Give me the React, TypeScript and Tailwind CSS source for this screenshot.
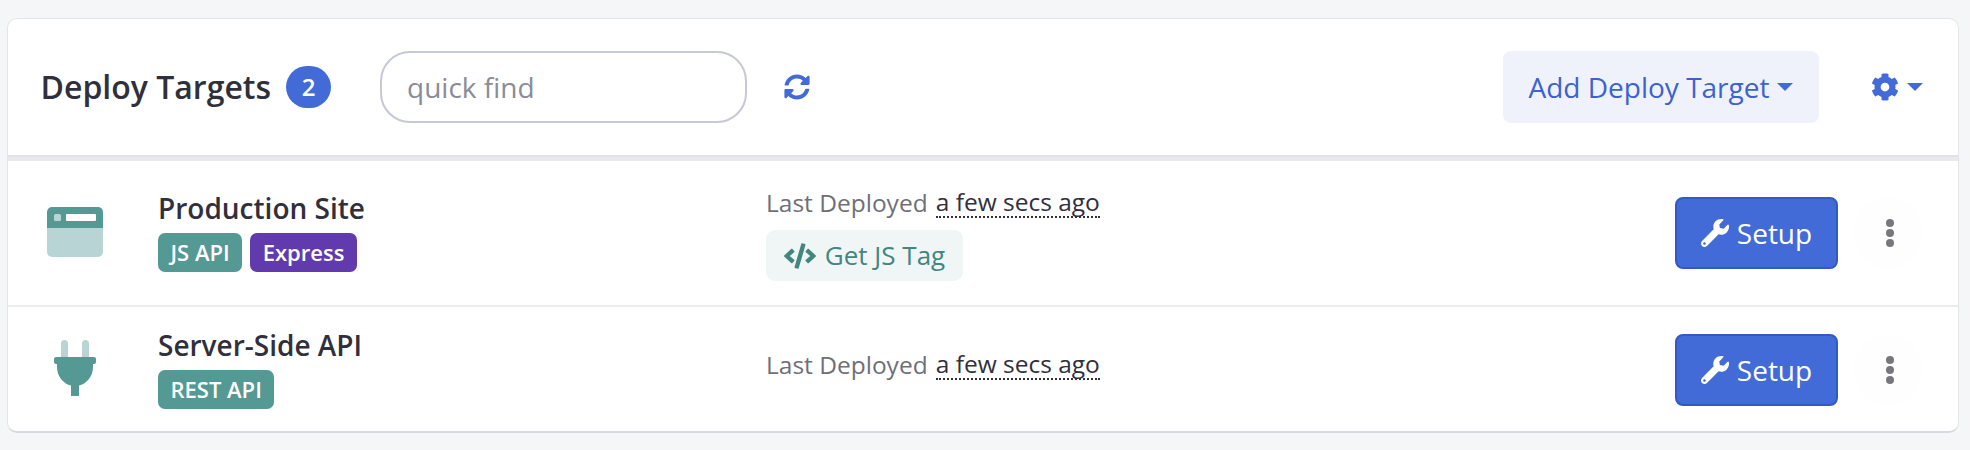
import { FaCode, FaCog, FaSyncAlt, FaWrench } from 'react-icons/fa';

function WindowIcon() {
  return (
    <svg width="56" height="50" viewBox="0 0 56 50" className="shrink-0">
      <path d="M0 21h56v24a5 5 0 0 1-5 5H5a5 5 0 0 1-5-5z" fill="#b9d4d4" />
      <path d="M5 0h46a5 5 0 0 1 5 5v16H0V5a5 5 0 0 1 5-5z" fill="#549994" />
      <rect x="7" y="7" width="7" height="7" rx="1.5" fill="#b9d4d4" />
      <rect x="19" y="7" width="30" height="7" rx="1" fill="#fff" />
    </svg>
  );
}

function PlugIcon() {
  return (
    <svg width="42" height="56" viewBox="0 0 42 56" className="shrink-0">
      <path d="M7 3.500a3.500 3.500 0 0 1 7 0V17H7zM28 3.500a3.500 3.500 0 0 1 7 0V17h-7z" fill="#b9d4d4" />
      <path
        d="M2 17h38a2 2 0 0 1 2 2v3a2 2 0 0 1-2 2h-1v3c0 10-7 17-14 18.500V56h-8V45.500C10 44 3 37 3 27v-3H2a2 2 0 0 1-2-2v-3a2 2 0 0 1 2-2z"
        fill="#549994"
      />
    </svg>
  );
}

function Caret({ className }: { className: string }) {
  return <span className={`inline-block w-0 h-0 border-x-[8px] border-x-transparent border-t-[8px] ${className}`} />;
}

function Pill({ label, purple }: { label: string; purple?: boolean }) {
  return (
    <span
      className={`h-[39px] px-[12.500px] rounded-[7px] flex items-center text-[22px] font-semibold text-white ${
        purple ? 'bg-[#613bad]' : 'bg-[#549994]'
      }`}
    >
      {label}
    </span>
  );
}

function RowActions() {
  return (
    <div className="flex items-center">
      <button className="w-[163px] h-[72px] bg-[#426bd8] border-2 border-[#3559c2] rounded-[8px] flex items-center justify-center gap-[8px] text-white text-[28px]">
        <FaWrench className="w-[28px] h-[28px]" />
        Setup
      </button>
      <div className="ml-[15px] w-[70px] h-[70px] rounded-full bg-[#fefefe] flex flex-col items-center justify-center gap-[2px] pl-[4px]">
        <span className="w-[8px] h-[8px] rounded-full bg-[#77777d]" />
        <span className="w-[8px] h-[8px] rounded-full bg-[#77777d]" />
        <span className="w-[8px] h-[8px] rounded-full bg-[#77777d]" />
      </div>
    </div>
  );
}

function Deployed() {
  return (
    <div className="flex items-center text-[24.500px] leading-[30px]">
      <span className="text-[#6f6f78]">Last Deployed</span>
      <span className="ml-[8px] text-[#30303c] border-b-2 border-dotted border-[#30303c] h-[30px] leading-[28px]">
        a few secs ago
      </span>
    </div>
  );
}

export default function App() {
  return (
    <div
      className="w-[1970px] h-[450px] bg-[#f5f6f8] pt-[18px] pl-[7px] pr-[11px] text-[#30303c]"
      style={{ fontFamily: '"Open Sans", sans-serif' }}
    >
      <div className="h-[415px] bg-white rounded-[10px] border border-[#e4e5e9] border-b-2 border-b-[#d9dadf] overflow-hidden flex flex-col">
        <div className="h-[136px] flex items-center pl-[33px] pr-[35px] shrink-0">
          <h1 className="text-[32px] font-semibold -ml-[0.500px]">Deploy Targets</h1>
          <span className="ml-[15px] w-[45px] h-[42px] rounded-full bg-[#426bd8] text-white text-[24px] font-semibold flex items-center justify-center">
            2
          </span>
          <input
            placeholder="quick find"
            className="ml-[49px] w-[367px] h-[72px] rounded-[30px] border-2 border-[#c6c8d5] px-[25px] text-[28px] placeholder:text-[#8a8c98] outline-none"
          />
          <FaSyncAlt className="ml-[37px] w-[26px] h-[26px] text-[#426bd8]" />
          <button className="ml-auto w-[316px] h-[72px] rounded-[8px] bg-[#eff2fb] text-[#3c62d0] text-[28px] flex items-center justify-center gap-[8px]">
            Add Deploy Target
            <Caret className="border-t-[#426bd8]" />
          </button>
          <FaCog className="ml-[52px] w-[28px] h-[28px] text-[#426bd8]" />
          <Caret className="ml-[8px] border-t-[#426bd8]" />
        </div>
        <div className="h-[6px] bg-[#e9e9ed] border-t-2 border-[#e2e2e6] shrink-0" />
        <div className="h-[146px] flex items-center pl-[39px] pr-[35px] border-b-2 border-[#ebebf2] shrink-0">
          <div className="w-[111px] -mt-[3px]">
            <WindowIcon />
          </div>
          <div className="w-[608px] -mt-[5px]">
            <div className="text-[28px] font-semibold leading-[36px]">Production Site</div>
            <div className="flex gap-[8px] mt-[7px]">
              <Pill label="JS API" />
              <Pill label="Express" purple />
            </div>
          </div>
          <div className="mt-[3px]">
            <Deployed />
            <button className="mt-[12px] w-[197px] h-[51px] rounded-[9px] bg-[#f0f6f6] text-[#42867f] text-[26px] flex items-center justify-center gap-[9px]">
              <FaCode className="w-[32px] h-[32px]" />
              Get JS Tag
            </button>
          </div>
          <div className="ml-auto">
            <RowActions />
          </div>
        </div>
        <div className="flex-1 flex items-center pl-[46px] pr-[35px]">
          <div className="w-[104px] -mt-[3px]">
            <PlugIcon />
          </div>
          <div className="w-[608px] -mt-[3px]">
            <div className="text-[28px] font-semibold leading-[36px]">Server-Side API</div>
            <div className="flex mt-[7px]">
              <Pill label="REST API" />
            </div>
          </div>
          <div className="-mt-[8px]">
            <Deployed />
          </div>
          <div className="ml-auto mt-[2px]">
            <RowActions />
          </div>
        </div>
      </div>
    </div>
  );
}
